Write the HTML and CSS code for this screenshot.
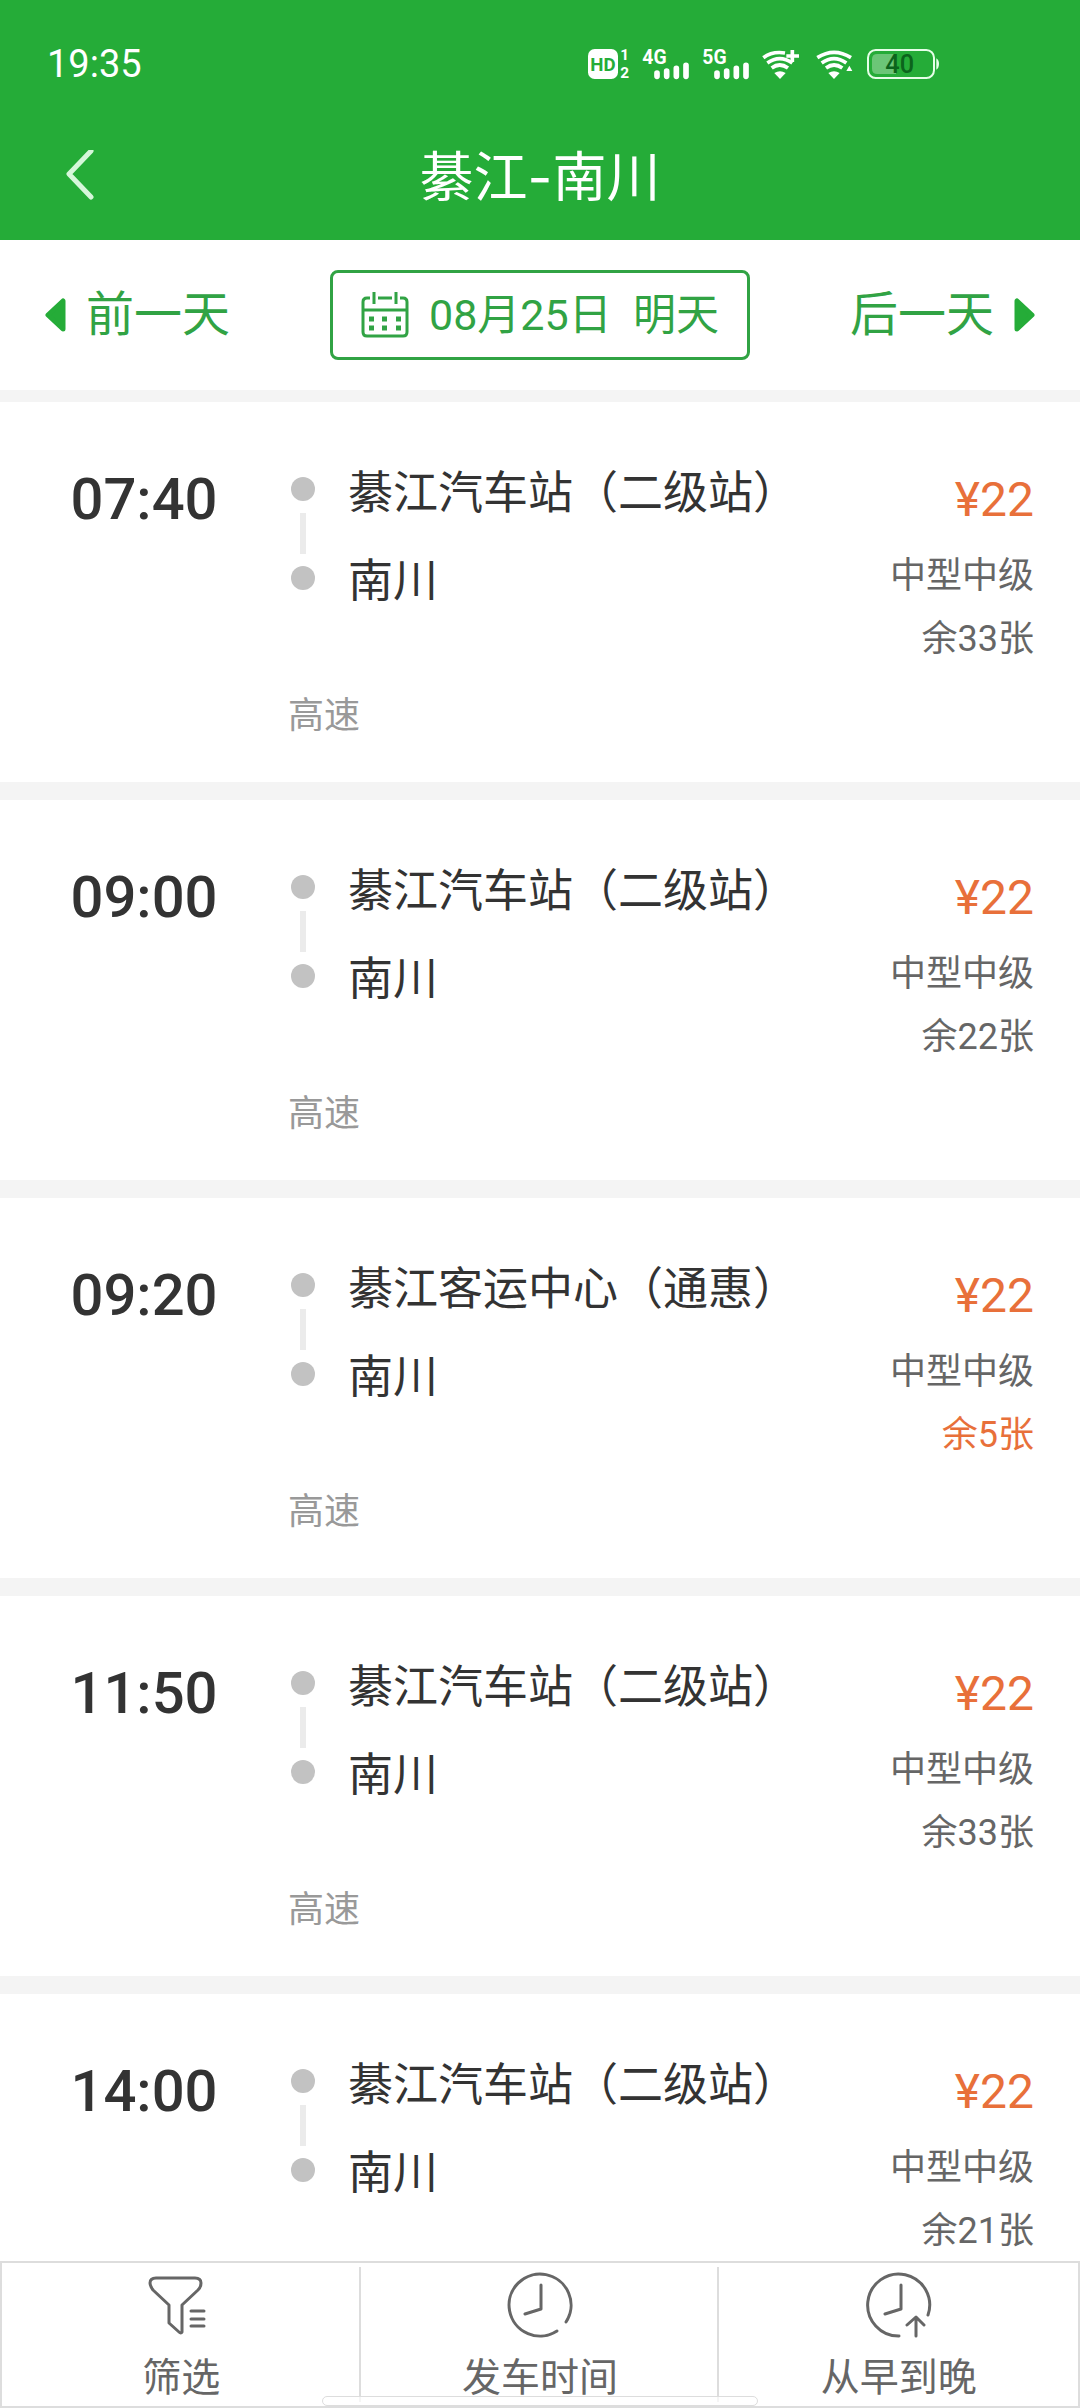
FILE: index.html
```html
<!DOCTYPE html>
<html lang="zh-CN">
<head>
<meta charset="utf-8">
<meta name="viewport" content="width=device-width, initial-scale=1">
<title>綦江-南川</title>
<link rel="stylesheet" href="styles.css">
</head>
<body>
<div class="app">
  <header class="header">
    <div class="status">
      <span class="status-time">19:35</span>
      <div class="status-icons">
        <svg width="42" height="50" viewBox="54 24 126 150">
          <rect x="54" y="54" width="90" height="90" rx="20" fill="#fff"/>
          <text class="hd" x="99" y="119" text-anchor="middle">HD</text>
          <text class="sim" x="164" y="88" text-anchor="middle">1</text>
          <text class="sim" x="164" y="142" text-anchor="middle">2</text>
        </svg>
        <svg class="signal" width="48" height="50" viewBox="216 24 144 150">
          <text class="net" x="217" y="98">4G</text>
          <path d="M261 126v10M290 120v16M319 112v24M348 103v33"/>
        </svg>
        <svg class="signal" width="48" height="50" viewBox="396 24 144 150">
          <text class="net" x="397" y="98">5G</text>
          <path d="M441 126v10M470 120v16M499 112v24M528 103v33"/>
        </svg>
        <svg class="wifi" width="42" height="50" viewBox="576 24 126 150">
          <path d="M580 80Q607 60 645 66M592 96Q629 70 667 96M605 111Q629 93 654 111"/>
          <path class="solid" d="M613 126Q630 116 647 126L630 144Z"/>
          <path d="M667 57v36M649 75h38"/>
        </svg>
        <svg class="wifi" width="39" height="50" viewBox="738 24 117 150">
          <path d="M742 80Q792 48 843 80M755 96Q792 70 829 96M768 111Q792 93 817 111"/>
          <path class="solid" d="M775 126Q792 116 809 126L792 144ZM829 120L838 104L847 120Z"/>
        </svg>
        <svg width="72" height="50" viewBox="891 24 216 150">
          <rect x="894" y="57" width="198" height="84" rx="23" fill="none" stroke="#e6ffe8" stroke-width="6"/>
          <path d="M1099 82q8 5 8 17t-8 17z" fill="#e6ffe8"/>
          <path d="M922 69h56v60h-56q-16 0-16-16v-28q0-16 16-16z" fill="#6bc677"/>
          <text class="level" x="989" y="125" text-anchor="middle">40</text>
        </svg>
      </div>
    </div>
    <nav class="titlebar">
      <button class="back" type="button" aria-label="返回">
        <svg width="28" height="52" viewBox="0 0 28 52"><path d="M25 1L3 24L25 47"/></svg>
      </button>
      <h1 class="title">綦江-南川</h1>
    </nav>
  </header>

  <div class="dates">
    <button class="day" type="button">
      <svg width="21" height="34" viewBox="0 0 21 34"><path d="M18 3v28L3 17z"/></svg>
      前一天
    </button>
    <button class="date" type="button">
      <svg width="48" height="46" viewBox="0 0 48 46">
        <path d="M9 6H6Q2 6 2 10V40Q2 44 6 44H42Q46 44 46 40V10Q46 6 42 6H39M17 6H31M2 18H46M13 0V12M35 0V12"/>
        <path class="dots" d="M8 27h5M21 27h5M35 27h5M8 36h5M21 36h5M35 36h5"/>
      </svg>
      <span class="date-text">08月25日&nbsp; 明天</span>
    </button>
    <button class="day" type="button">
      后一天
      <svg width="21" height="34" viewBox="0 0 21 34"><path d="M3 3v28L18 17z"/></svg>
    </button>
  </div>

  <ul class="trips">
    <li class="trip">
      <time class="depart">07:40</time>
      <div class="route">
        <div class="rail"><i class="dot"></i><i class="bar"></i><i class="dot"></i></div>
        <div class="stops"><span>綦江汽车站（二级站）</span><span>南川</span></div>
      </div>
      <div class="fare"><strong class="price">¥22</strong><span>中型中级</span><span>余33张</span></div>
      <span class="tag">高速</span>
    </li>
    <li class="trip">
      <time class="depart">09:00</time>
      <div class="route">
        <div class="rail"><i class="dot"></i><i class="bar"></i><i class="dot"></i></div>
        <div class="stops"><span>綦江汽车站（二级站）</span><span>南川</span></div>
      </div>
      <div class="fare"><strong class="price">¥22</strong><span>中型中级</span><span>余22张</span></div>
      <span class="tag">高速</span>
    </li>
    <li class="trip">
      <time class="depart">09:20</time>
      <div class="route">
        <div class="rail"><i class="dot"></i><i class="bar"></i><i class="dot"></i></div>
        <div class="stops"><span>綦江客运中心（通惠）</span><span>南川</span></div>
      </div>
      <div class="fare"><strong class="price">¥22</strong><span>中型中级</span><span class="few">余5张</span></div>
      <span class="tag">高速</span>
    </li>
    <li class="trip">
      <time class="depart">11:50</time>
      <div class="route">
        <div class="rail"><i class="dot"></i><i class="bar"></i><i class="dot"></i></div>
        <div class="stops"><span>綦江汽车站（二级站）</span><span>南川</span></div>
      </div>
      <div class="fare"><strong class="price">¥22</strong><span>中型中级</span><span>余33张</span></div>
      <span class="tag">高速</span>
    </li>
    <li class="trip">
      <time class="depart">14:00</time>
      <div class="route">
        <div class="rail"><i class="dot"></i><i class="bar"></i><i class="dot"></i></div>
        <div class="stops"><span>綦江汽车站（二级站）</span><span>南川</span></div>
      </div>
      <div class="fare"><strong class="price">¥22</strong><span>中型中级</span><span>余21张</span></div>
      <span class="tag">高速</span>
    </li>
  </ul>

  <footer class="tools">
    <button class="tool" type="button">
      <svg width="66" height="66" viewBox="0 0 66 66">
        <path d="M8 6H47Q53 6 53 11Q53 15 50 18L34 33V60Q33 62 31 60L21 51V33L5 18Q2 14 2 11Q2 6 8 6Z"/>
        <path d="M43 39H56M43 47H56M43 54H56"/>
      </svg>
      筛选
    </button>
    <button class="tool" type="button">
      <svg width="66" height="66" viewBox="0 0 66 66">
        <path d="M59 50A31 31 0 1 0 50 59M34 13V37L18 42"/>
      </svg>
      发车时间
    </button>
    <button class="tool" type="button">
      <svg width="66" height="66" viewBox="0 0 66 66">
        <path d="M62 43A31 31 0 1 0 33 64M35 13V37L19 42M50 64V46M41 53L50 45L58 53"/>
      </svg>
      从早到晚
    </button>
    <div class="home-indicator"></div>
  </footer>
</div>
</body>
</html>
```
FILE: styles.css
```css
* {
  box-sizing: border-box;
}

body {
  margin: 0;
  background: #f4f4f4;
  color: #333;
  font-family: Roboto, "Noto Sans CJK SC", sans-serif;
  font-size: 36px;
}

button {
  margin: 0;
  padding: 0;
  border: 0;
  background: none;
  color: inherit;
  font: inherit;
}

svg {
  display: block;
  flex: none;
}

.app {
  display: flex;
  flex-direction: column;
  height: 100vh;
}

/* Header */
.header {
  flex: none;
  background: #25ac38;
  color: #fff;
}

.status {
  display: flex;
  align-items: center;
  justify-content: space-between;
  height: 112px;
  padding: 16px 141px 0 47px;
}

.status-time {
  font-size: 38px;
  line-height: 48px;
}

.status-icons {
  display: flex;
  gap: 12px;
}

.status-icons text {
  fill: #fff;
  font-weight: 700;
}

.status-icons .hd {
  fill: #25ac38;
  font-size: 56px;
}

.status-icons .sim {
  font-size: 46px;
}

.status-icons .net {
  font-size: 58px;
}

.status-icons .level {
  fill: #0b641c;
  font-size: 76px;
  font-weight: 500;
}

.signal path {
  stroke: #fff;
  stroke-width: 17;
  stroke-linecap: round;
}

.wifi path {
  fill: none;
  stroke: #fff;
  stroke-width: 11;
}

.wifi .solid {
  fill: #fff;
  stroke: none;
}

.titlebar {
  display: grid;
  grid-template-columns: 160px 1fr 160px;
  align-items: center;
  height: 128px;
}

.back {
  padding-left: 66px;
}

.back path {
  fill: none;
  stroke: #d6f7da;
  stroke-width: 5;
  stroke-linecap: round;
  stroke-linejoin: round;
}

.title {
  margin: 0;
  padding-top: 4px;
  font-family: Inter, "Noto Sans CJK SC", sans-serif;
  font-size: 54px;
  font-weight: 400;
  line-height: 72px;
  text-align: center;
}

/* Date switcher */
.dates {
  display: flex;
  flex: none;
  align-items: center;
  justify-content: space-between;
  height: 150px;
  padding: 0 45px;
  background: #fff;
  color: #31a344;
}

.day {
  display: flex;
  align-items: center;
  gap: 20px;
  font-size: 48px;
  line-height: 64px;
}

.day path {
  fill: #25ac38;
  stroke: #25ac38;
  stroke-width: 5;
  stroke-linejoin: round;
}

.date {
  display: flex;
  align-items: center;
  justify-content: center;
  gap: 20px;
  width: 420px;
  height: 90px;
  border: 3px solid #31a344;
  border-radius: 8px;
  font-size: 43px;
  line-height: 64px;
}

.date path {
  fill: none;
  stroke: #31a344;
  stroke-width: 3;
}

.date .dots {
  stroke-width: 5;
}

/* Trip list */
.trips {
  display: flex;
  flex: 1;
  flex-direction: column;
  gap: 18px;
  min-height: 0;
  margin: 12px 0 0;
  padding: 0;
  overflow-y: auto;
  list-style: none;
  scrollbar-width: none;
}

.trip {
  display: grid;
  flex: none;
  grid-template-columns: 288px 1fr auto;
  row-gap: 14px;
  padding: 52px 46px 34px 0;
  background: #fff;
}

.depart {
  font-size: 58px;
  font-weight: 500;
  line-height: 90px;
  text-align: center;
}

.route {
  display: flex;
  gap: 33px;
  padding-left: 3px;
}

.rail {
  display: flex;
  flex-direction: column;
  align-items: center;
  gap: 12px;
  padding-top: 23px;
}

.dot {
  width: 24px;
  height: 24px;
  border-radius: 50%;
  background: #c2c2c2;
}

.bar {
  width: 6px;
  height: 41px;
  background: #ebebeb;
}

.stops {
  display: flex;
  flex-direction: column;
  gap: 16px;
  padding-top: 4px;
  font-size: 45px;
  line-height: 72px;
}

.fare {
  display: flex;
  flex-direction: column;
  color: #666;
  line-height: 63px;
  text-align: right;
}

.price {
  color: #e8703a;
  font-size: 48px;
  font-weight: 400;
  line-height: 91px;
}

.few {
  color: #e8703a;
}

.tag {
  grid-column: 2;
  color: #999;
  line-height: 63px;
}

/* Bottom toolbar */
.tools {
  position: relative;
  display: grid;
  flex: none;
  grid-template-columns: repeat(3, 1fr);
  border: 2px solid #ddd;
  background: #fff;
}

.tool {
  display: flex;
  flex-direction: column;
  align-items: center;
  gap: 12px;
  padding-top: 9px;
  background: linear-gradient(#ddd, #ddd) right / 2px calc(100% - 8px) no-repeat;
  color: #666;
  font-size: 39px;
  line-height: 56px;
}

.tool:nth-child(3) {
  background: none;
}

.tool path {
  fill: none;
  stroke: #666;
  stroke-width: 3;
  stroke-linecap: round;
  stroke-linejoin: round;
}

.home-indicator {
  position: absolute;
  bottom: 0;
  left: 50%;
  width: 436px;
  height: 10px;
  border: 1px solid #ddd;
  border-radius: 5px;
  background: rgba(255, 255, 255, 0.7);
  transform: translateX(-50%);
}
```
